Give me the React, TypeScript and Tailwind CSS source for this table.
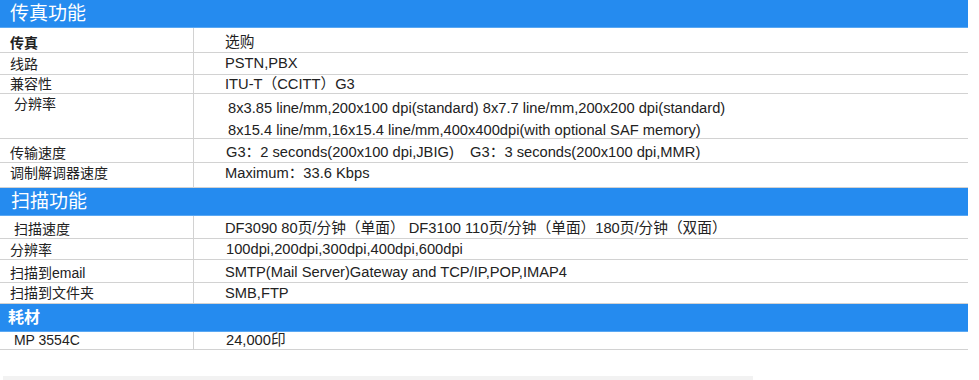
import React from 'react'

type Row = {
  label: string
  value: React.ReactNode
  h: string
  align?: string
  bold?: boolean
}

type Section = {
  title: string
  titleClass: string
  rows: Row[]
}

const sections: Section[] = [
  {
    title: '传真功能',
    titleClass: 'text-[19px] pl-[10px]',
    rows: [
      { label: '传真', value: '选购', h: 'h-[25px]', align: 'pt-[5px]', bold: true },
      { label: '线路', value: 'PSTN,PBX', h: 'h-[22px]' },
      { label: '兼容性', value: 'ITU-T（CCITT）G3', h: 'h-[19px]' },
      {
        label: ' 分辨率',
        value: (
          <div className="flex flex-col leading-[22px] pl-[3px]">
            <span>8x3.85 line/mm,200x100 dpi(standard) 8x7.7 line/mm,200x200 dpi(standard)</span>
            <span>8x15.4 line/mm,16x15.4 line/mm,400x400dpi(with optional SAF memory)</span>
          </div>
        ),
        h: 'h-[45px]',
        align: 'items-start pt-[3px]',
      },
      {
        label: '传输速度',
        value: <span className="whitespace-pre pl-[1px]">{'G3：2 seconds(200x100 dpi,JBIG)    G3：3 seconds(200x100 dpi,MMR)'}</span>,
        h: 'h-[24px]',
        align: 'pt-[4px]',
      },
      { label: '调制解调器速度', value: 'Maximum：33.6 Kbps', h: 'h-[25px]', align: 'pb-[4px]' },
    ],
  },
  {
    title: '扫描功能',
    titleClass: 'text-[19px] pl-[11px]',
    rows: [
      { label: ' 扫描速度', value: 'DF3090 80页/分钟（单面） DF3100 110页/分钟（单面）180页/分钟（双面）', h: 'h-[23px]', align: 'pt-[3px]' },
      { label: '分辨率', value: <span className="pl-[1px]">100dpi,200dpi,300dpi,400dpi,600dpi</span>, h: 'h-[21px]', align: 'pt-[1px]' },
      { label: '扫描到email', value: 'SMTP(Mail Server)Gateway and TCP/IP,POP,IMAP4', h: 'h-[23px]', align: 'pt-[3px]' },
      { label: '扫描到文件夹', value: 'SMB,FTP', h: 'h-[21px]' },
    ],
  },
  {
    title: '耗材',
    titleClass: 'text-[16px] font-semibold pl-[8px]',
    rows: [{ label: ' MP 3554C', value: <span className="pl-[1px]">24,000印</span>, h: 'h-[18px]', align: 'pb-[1px]' }],
  },
]

export default function App() {
  return (
    <div
      className="w-[979px] h-[380px] bg-white overflow-hidden text-[#222] text-[14.7px]"
      style={{ fontFamily: '"Liberation Sans", "Noto Sans CJK SC", sans-serif' }}
    >
      <div className="w-[968px]">
        {sections.map((section) => (
          <div key={section.title}>
            <div className={`h-[28px] bg-[#258bef] text-white flex items-center leading-none border-b border-[#5aa8f3] ${section.titleClass}`}>
              {section.title}
            </div>
            {section.rows.map((row) => (
              <div key={row.label} className={`grid grid-cols-[194px_1fr] border-b border-[#d2d2d2] ${row.h}`}>
                <div
                  className={`flex items-center whitespace-pre pl-[10px] text-[14px] border-r border-[#d2d2d2] leading-none ${row.bold ? 'font-semibold' : ''} ${row.align ?? ''}`}
                >
                  {row.label}
                </div>
                <div className={`flex items-center pl-[31px] leading-none ${row.align ?? ''}`}>
                  {row.value}
                </div>
              </div>
            ))}
          </div>
        ))}
      </div>
      <div className="mt-[26px] ml-[3px] w-[750px] h-[6px] bg-[#f2f2f2]" />
    </div>
  )
}
